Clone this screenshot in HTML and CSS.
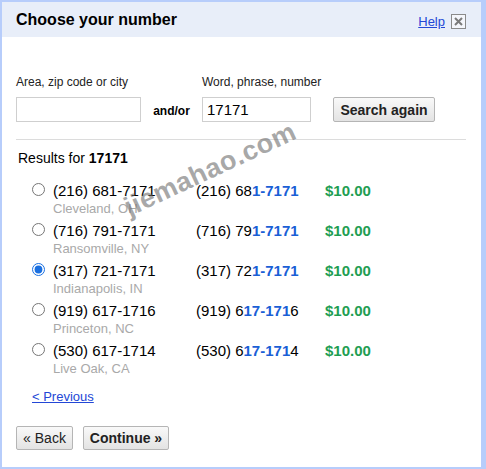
FILE: index.html
```html
<!DOCTYPE html>
<html>
<head>
<meta charset="utf-8">
<link rel="stylesheet" href="styles.css">
</head>
<body>
<div class="dialog">
  <div class="header">
    <h1 class="title">Choose your number</h1>
    <div class="header-links">
      <a class="help" href="#">Help</a>
      <span class="close">
        <svg width="15" height="15" viewBox="0 0 15 15"><rect x="0.5" y="0.5" width="14" height="14" fill="#f4f6fb" stroke="#8a8a8a"/><path d="M4 4 L11 11 M11 4 L4 11" stroke="#7a7a7a" stroke-width="2"/></svg>
      </span>
    </div>
  </div>
  <div class="content">
    <div class="search">
      <label class="lbl">Area, zip code or city</label>
      <span></span>
      <label class="lbl">Word, phrase, number</label>
      <span></span>
      <input class="field field-area" type="text">
      <span class="andor">and/or</span>
      <input class="field field-word" type="text" value="17171">
      <button class="btn btn-search">Search again</button>
    </div>
    <div class="divider"></div>
    <div class="results-label">Results for <b>17171</b></div>
    <ul class="results">
      <li class="result">
        <input class="radio" type="radio" name="num">
        <div class="num"><div class="phone">(216) 681-7171</div><div class="city">Cleveland, OH</div></div>
        <div class="match">(216) 68<span class="hl">1-7171</span></div>
        <div class="price">$10.00</div>
      </li>
      <li class="result">
        <input class="radio" type="radio" name="num">
        <div class="num"><div class="phone">(716) 791-7171</div><div class="city">Ransomville, NY</div></div>
        <div class="match">(716) 79<span class="hl">1-7171</span></div>
        <div class="price">$10.00</div>
      </li>
      <li class="result">
        <input class="radio" type="radio" name="num" checked>
        <div class="num"><div class="phone">(317) 721-7171</div><div class="city">Indianapolis, IN</div></div>
        <div class="match">(317) 72<span class="hl">1-7171</span></div>
        <div class="price">$10.00</div>
      </li>
      <li class="result">
        <input class="radio" type="radio" name="num">
        <div class="num"><div class="phone">(919) 617-1716</div><div class="city">Princeton, NC</div></div>
        <div class="match">(919) 6<span class="hl">17-171</span>6</div>
        <div class="price">$10.00</div>
      </li>
      <li class="result">
        <input class="radio" type="radio" name="num">
        <div class="num"><div class="phone">(530) 617-1714</div><div class="city">Live Oak, CA</div></div>
        <div class="match">(530) 6<span class="hl">17-171</span>4</div>
        <div class="price">$10.00</div>
      </li>
    </ul>
    <a class="prev" href="#">&lt; Previous</a>
    <div class="actions">
      <button class="btn btn-back">&laquo; Back</button>
      <button class="btn btn-continue">Continue &raquo;</button>
    </div>
  </div>
  <div class="watermark">jiemahao.com</div>
</div>
</body>
</html>
```
FILE: styles.css
```css
* { box-sizing: border-box; }
html, body { margin: 0; padding: 0; background: #fff; }
body { font-family: "Liberation Sans", Arial, sans-serif; color: #000; }

.dialog {
  position: relative;
  width: 486px;
  height: 469px;
  border-style: solid;
  border-color: #b7cdfb;
  border-width: 2px 5px 2px 2px;
  background: #fff;
  overflow: hidden;
}

.header {
  height: 35px;
  background: #e8eef9;
  display: flex;
  align-items: center;
  justify-content: space-between;
  padding: 0 15px 0 14px;
}
.title {
  margin: 0;
  font-size: 16px;
  font-weight: bold;
  line-height: 18px;
  padding-top: 1px;
}
.header-links { display: flex; align-items: center; gap: 6px; padding-top: 3px; }
.help { color: #2347d6; font-size: 13px; text-decoration: underline; line-height: 15px; }
.close { display: block; width: 15px; height: 15px; }
.close svg { display: block; }

.content { padding: 38px 15px 0 14px; }

.search {
  display: grid;
  grid-template-columns: 125px 61px 131px 102px;
  row-gap: 7px;
  align-items: center;
}
.lbl { font-size: 12px; line-height: 14px; color: #222; }
.field {
  height: 25px;
  border: 1px solid #cfcfcf;
  font-family: "Liberation Sans", Arial, sans-serif;
  font-size: 15px;
  padding: 0 4px;
  outline: none;
  margin: 0;
}
.field-area { width: 125px; }
.field-word { width: 109px; }
.andor { text-align: center; font-size: 12px; font-weight: bold; padding-top: 3px; }
.btn {
  font-family: "Liberation Sans", Arial, sans-serif;
  font-size: 14px;
  color: #222;
  border: 1px solid #b5b5b5;
  border-radius: 2px;
  background: linear-gradient(#f9f9f9, #e3e3e3);
  padding: 0;
  margin: 0;
}
.btn-search { width: 102px; height: 25px; font-weight: bold; margin-top: 1px; }

.divider { height: 1px; background: #dcdcdc; margin-top: 17px; }

.results-label { font-size: 14px; line-height: 16px; margin-top: 10px; padding-left: 2px; }

.results { list-style: none; margin: 16px 0 0; padding: 0 0 0 16px; }
.result { display: flex; align-items: flex-start; height: 40px; }
.radio { margin: 1px 8px 0 0; width: 13px; height: 13px; accent-color: #1a6fe0; }
.num { width: 143px; }
.phone { font-size: 15px; line-height: 18px; }
.city { font-size: 13px; line-height: 16px; color: #a9a9a9; margin-top: 1px; }
.match { width: 129px; font-size: 15px; line-height: 18px; }
.hl { color: #1a5fd6; font-weight: bold; }
.price { font-size: 15px; line-height: 18px; font-weight: bold; color: #1e9e52; }

.prev {
  display: inline-block;
  margin: 7px 0 0 16px;
  font-size: 13px;
  line-height: 16px;
  color: #2347d6;
  text-decoration: underline;
}

.actions { display: flex; gap: 10px; margin-top: 21px; }
.btn-back { width: 57px; height: 24px; }
.btn-continue { width: 86px; height: 24px; font-weight: bold; }

.watermark {
  position: absolute;
  left: 130px;
  top: 190px;
  font-size: 27px;
  font-weight: bold;
  letter-spacing: 0.5px;
  color: rgba(110, 110, 110, 0.6);
  transform: rotate(-25deg);
  transform-origin: 0 100%;
  line-height: 30px;
  white-space: nowrap;
  pointer-events: none;
}
```
